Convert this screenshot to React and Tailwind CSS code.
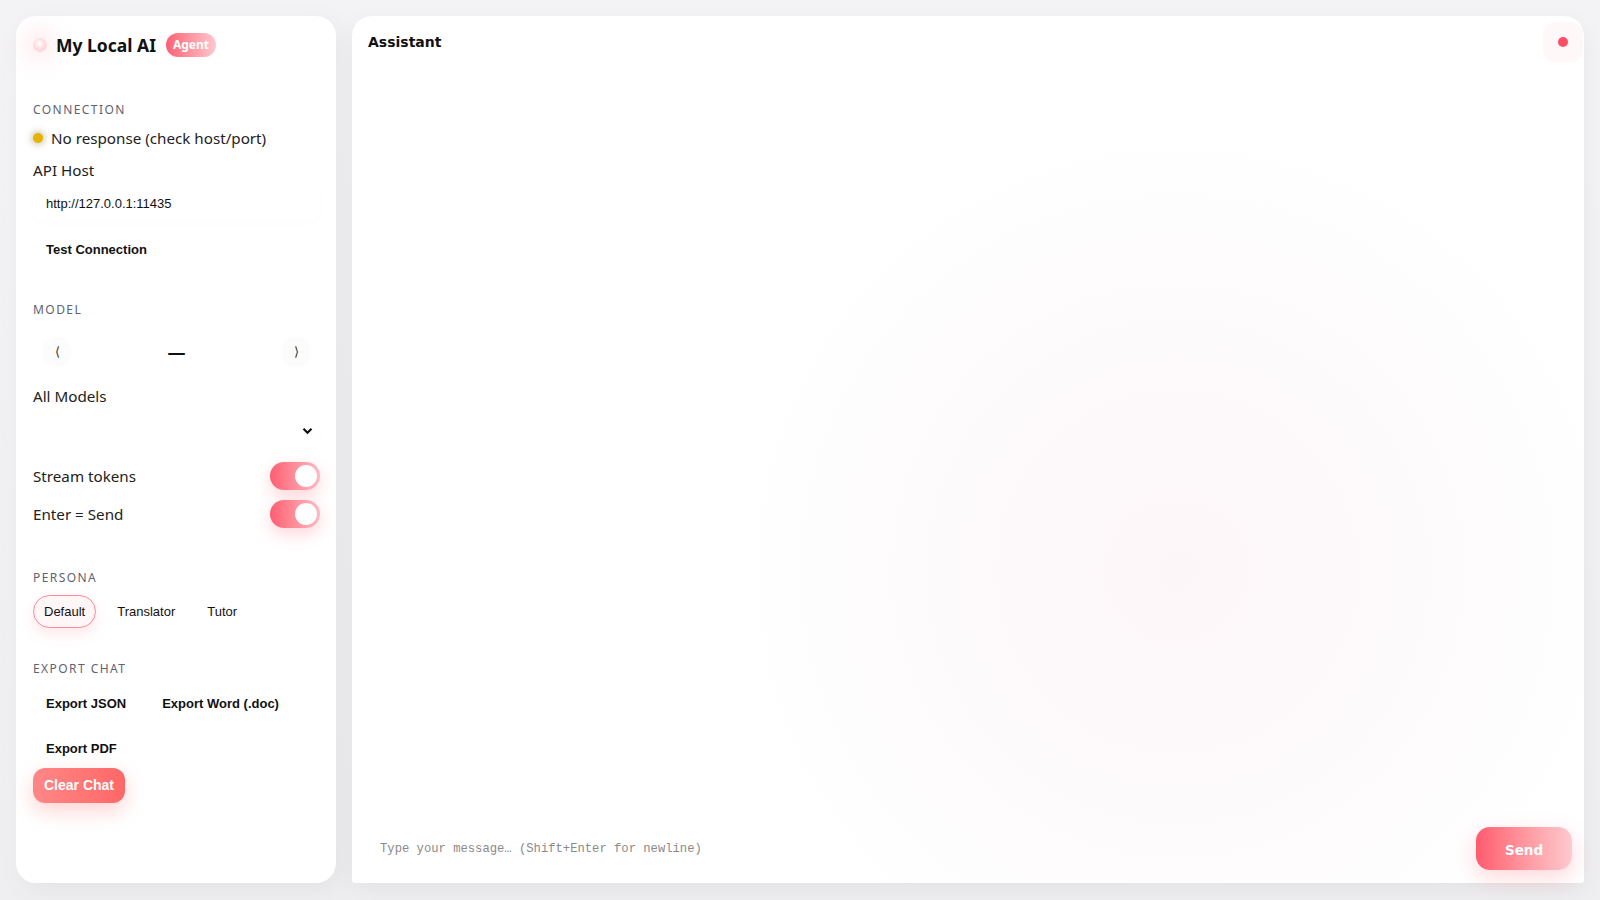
import { useState } from "react";

const sans = "font-['Noto_Sans','Segoe_UI',sans-serif]";
const arial = "font-['Liberation_Sans',Arial,sans-serif]";

function SectionLabel({ children, className = "" }) {
  return (
    <div
      className={`text-[12px] leading-[16px] tracking-[0.12em] text-[#5f6270] uppercase ${className}`}
    >
      {children}
    </div>
  );
}

function Toggle({ on }) {
  return (
    <button
      type="button"
      className={`flex h-[28px] w-[50px] items-center rounded-full px-[3px] shadow-[0_6px_16px_rgba(255,90,110,0.25)] ${
        on
          ? "justify-end bg-gradient-to-r from-[#ff5c72] to-[#ffb9c3]"
          : "justify-start bg-[#e5e5ea]"
      }`}
    >
      <span className="h-[22px] w-[22px] rounded-full bg-white" />
    </button>
  );
}

export default function App() {
  const [persona, setPersona] = useState("Default");
  const [stream, setStream] = useState(true);
  const [enterSend, setEnterSend] = useState(true);

  return (
    <div
      className={`flex h-[900px] gap-4 bg-gradient-to-b from-[#f3f3f5] to-[#efeff1] p-4 pb-[17px] ${sans}`}
    >
      <aside className="flex w-[320px] shrink-0 flex-col rounded-[20px] bg-white pl-[17px] pr-4 pt-4 shadow-[6px_8px_24px_rgba(120,90,100,0.08)]">
        <div className="mt-[1px] flex h-[24px] items-center">
          <span className="h-[14px] w-[14px] rounded-full bg-[radial-gradient(circle_at_45%_40%,#ffffff_0,#ffdde2_45%,#ffcad2_100%)] shadow-[0_0_20px_10px_rgba(255,200,210,0.3)]" />
          <h1 className="ml-[9px] text-[17.5px] font-bold text-[#111]">My Local AI</h1>
          <span
            className={`ml-[10px] flex h-[24px] items-center rounded-full bg-gradient-to-r from-[#ff5e74] to-[#ffc7cf] px-[7px] text-[12px] font-bold text-white`}
          >
            Agent
          </span>
        </div>

        <SectionLabel className="mt-[45px]">Connection</SectionLabel>
        <div className="mt-2 flex h-[24px] items-center text-[15.2px] text-[#222]">
          <span className="h-[10px] w-[10px] rounded-full bg-[#e6b400] shadow-[0_0_6px_2px_rgba(120,100,40,0.35)]" />
          <span className="ml-[8px]">No response (check host/port)</span>
        </div>
        <div className="mt-2 h-[24px] text-[15.2px] leading-[24px] text-[#222]">API Host</div>
        <input
          defaultValue="http://127.0.0.1:11435"
          className={`mt-[3px] h-[36px] w-full rounded-[10px] bg-white px-[13px] text-[13px] text-[#111] shadow-[0_2px_8px_rgba(0,0,0,0.015)] outline-none ${arial}`}
        />
        <div className="mt-[11px]">
          <button
            type="button"
            className={`h-[36px] rounded-[10px] px-[13px] text-[13px] font-bold text-[#111] ${arial}`}
          >
            Test Connection
          </button>
        </div>

        <SectionLabel className="mt-[34px]">Model</SectionLabel>
        <div className="mt-[19px] flex h-[30px] items-center justify-between px-[9px]">
          <button
            type="button"
            className="flex h-[30px] w-[30px] items-center justify-center rounded-full bg-[#fdfcfd] text-[13px] text-[#333]"
          >
            ⟨
          </button>
          <span className="text-[18px] font-bold text-[#111]">—</span>
          <button
            type="button"
            className="flex h-[30px] w-[30px] items-center justify-center rounded-full bg-[#fdfcfd] text-[13px] text-[#333]"
          >
            ⟩
          </button>
        </div>
        <div className="mt-[17px] h-[24px] text-[15.2px] leading-[24px] text-[#222]">All Models</div>
        <div className="mt-[5px] flex h-[36px] items-center justify-end rounded-[10px] bg-white pr-[7px] shadow-[0_2px_8px_rgba(0,0,0,0.012)]">
          <svg width="11" height="8" viewBox="0 0 11 8" fill="none">
            <path d="M1.5 1.8 L5.5 5.8 L9.5 1.8" stroke="#111" strokeWidth="2.2" />
          </svg>
        </div>

        <div className="mt-[13px] flex h-[28px] items-center justify-between text-[15.2px] text-[#222]">
          <span>Stream tokens</span>
          <span onClick={() => setStream(!stream)}>
            <Toggle on={stream} />
          </span>
        </div>
        <div className="mt-[10px] flex h-[28px] items-center justify-between text-[15.2px] text-[#222]">
          <span>Enter = Send</span>
          <span onClick={() => setEnterSend(!enterSend)}>
            <Toggle on={enterSend} />
          </span>
        </div>

        <SectionLabel className="mt-[42px]">Persona</SectionLabel>
        <div className={`mt-[9px] flex gap-[10px] text-[13px] text-[#111] ${arial}`}>
          {["Default", "Translator", "Tutor"].map((p) => (
            <button
              key={p}
              type="button"
              onClick={() => setPersona(p)}
              className={`h-[33px] rounded-full px-[10px] ${
                persona === p
                  ? "border border-[#ff8798] bg-[#fff6f7] shadow-[0_6px_14px_rgba(255,120,140,0.18)]"
                  : "border border-transparent"
              }`}
            >
              {p}
            </button>
          ))}
        </div>

        <SectionLabel className="mt-[33px]">Export Chat</SectionLabel>
        <div className={`mt-[9px] flex flex-wrap gap-x-[10px] gap-y-[9px] text-[13px] font-bold text-[#111] ${arial}`}>
          <button type="button" className="h-[36px] rounded-[10px] px-[13px]">
            Export JSON
          </button>
          <button type="button" className="h-[36px] rounded-[10px] px-[13px]">
            Export Word (.doc)
          </button>
          <button type="button" className="h-[36px] rounded-[10px] px-[13px]">
            Export PDF
          </button>
        </div>
        <div className="mt-[1px]">
          <button
            type="button"
            className={`h-[35px] rounded-[12px] bg-gradient-to-r from-[#ff8787] to-[#ff6767] px-[11px] text-[14px] font-bold text-white shadow-[0_8px_20px_rgba(255,110,110,0.3)] ${arial}`}
          >
            Clear Chat
          </button>
        </div>
      </aside>

      <main className="flex flex-1 flex-col rounded-t-[20px] rounded-b-[3px] bg-white bg-[radial-gradient(circle_at_67%_64%,#fcf6f8_0,#fdf9fa_18%,#fefcfd_30%,#ffffff_45%)] shadow-[0_8px_24px_rgba(0,0,0,0.05)]">
        <header className="flex items-center justify-between pl-4 pr-[1px] pt-[6px]">
          <h2 className="mt-[1px] font-['DejaVu_Sans',Verdana,sans-serif] text-[14px] font-bold text-[#111]">
            Assistant
          </h2>
          <div className="flex h-[40px] w-[40px] items-center justify-center rounded-[12px] bg-[#fff8f8]">
            <span className="h-[10px] w-[10px] rounded-full bg-[#ff4d63]" />
          </div>
        </header>

        <div className="flex-1" />

        <div className="flex items-center gap-3 pb-[13px] pl-[28px] pr-3">
          <textarea
            rows={1}
            placeholder="Type your message… (Shift+Enter for newline)"
            className="h-[24px] flex-1 resize-none bg-transparent font-['Liberation_Mono','DejaVu_Sans_Mono',monospace] text-[12.2px] leading-[24px] text-[#333] outline-none placeholder:text-[#8a8a8a]"
          />
          <button
            type="button"
            className="h-[43px] w-[96px] rounded-[14px] bg-gradient-to-r from-[#ff5a6e] to-[#ffc9d0] pt-[3px] font-['DejaVu_Sans',Verdana,sans-serif] text-[13.5px] font-bold text-white shadow-[0_8px_22px_rgba(255,100,120,0.25)]"
          >
            Send
          </button>
        </div>
      </main>
    </div>
  );
}
